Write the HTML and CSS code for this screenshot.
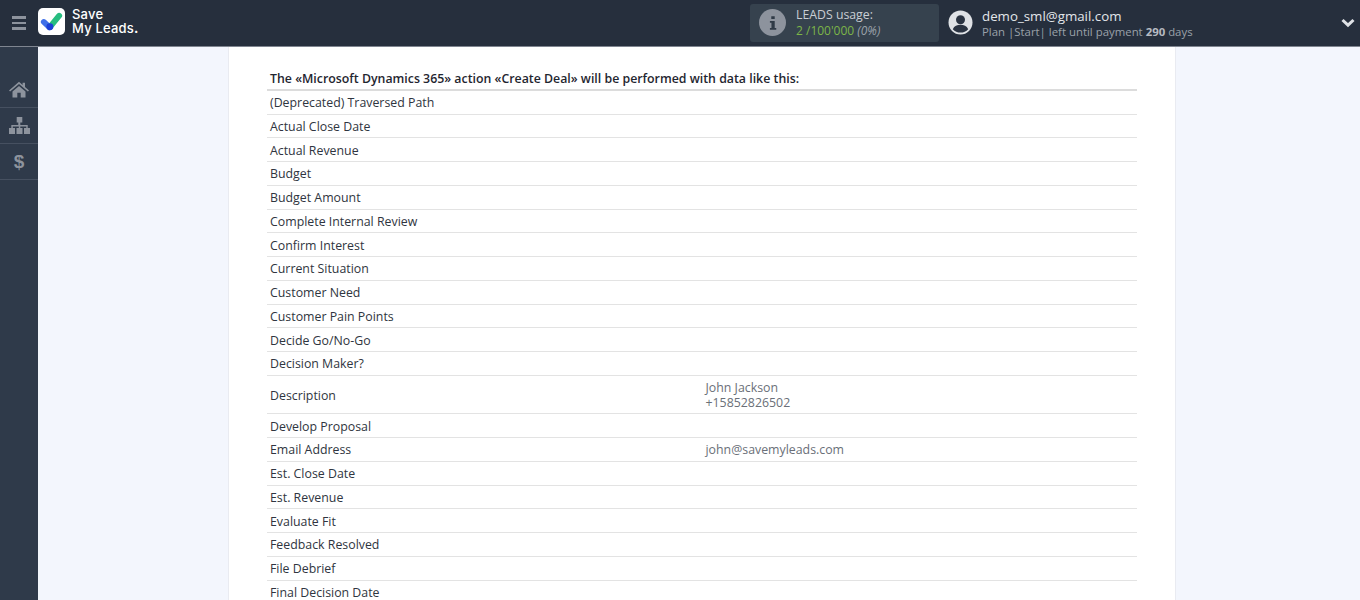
FILE: index.html
```html
<!DOCTYPE html>
<html lang="en">
<head>
<meta charset="utf-8">
<title>Save My Leads</title>
<link rel="stylesheet" href="styles.css">
</head>
<body>
<header class="topbar">
  <button class="burger" aria-label="Menu"><span></span><span></span><span></span></button>
  <div class="logo">
    <div class="logo-mark">
      <svg width="28" height="28" viewBox="0 0 28 28">
        <path d="M6 14.500 L12 20" stroke="#3f6fe8" stroke-width="6" stroke-linecap="round"/>
        <path d="M12.500 19.500 L22 8" stroke="#27bd80" stroke-width="6" stroke-linecap="round"/>
        <circle cx="12.300" cy="19.400" r="3.600" fill="#1c3fd6"/>
      </svg>
    </div>
    <div class="logo-text">Save<br>My Leads<span class="logo-dot">.</span></div>
  </div>
  <div class="usage">
    <div class="info-circle">
      <svg width="12" height="16" viewBox="0 0 14 18"><path fill="#2f3a46" d="M5 1h4v3.400H5zM3.400 6.600H9v8.200h1.800V17H3.400v-2.200h1.800v-6H3.400z"/></svg>
    </div>
    <div class="usage-text">
      <div class="usage-title">LEADS usage:</div>
      <div class="usage-count"><span class="usage-green">2 /100'000</span> <em>(0%)</em></div>
    </div>
  </div>
  <div class="user">
    <svg class="avatar" width="25" height="25" viewBox="0 0 25 25">
      <circle cx="12.500" cy="12.500" r="12" fill="#dfe2e6"/>
      <circle cx="12.500" cy="9.800" r="4.500" fill="#2a3342"/>
      <path fill="#2a3342" d="M4.800 19.200c1.400-3.200 4.400-4.400 7.700-4.400s6.300 1.200 7.700 4.400c-2 2.200-4.700 3.400-7.700 3.400s-5.700-1.200-7.700-3.400z"/>
    </svg>
    <div class="user-text">
      <div class="user-mail">demo_sml@gmail.com</div>
      <div class="user-plan">Plan |Start| left until payment <b>290</b> days</div>
    </div>
  </div>
  <svg class="chevron" width="14" height="10" viewBox="0 0 14 10"><path d="M1.500 2 L7 7.200 L12.500 2" fill="none" stroke="#dfe2e6" stroke-width="3"/></svg>
</header>
<div class="shell">
  <nav class="sidebar">
    <a class="side-item">
      <svg width="20" height="17" viewBox="0 0 20 17"><path fill="#8d939d" d="M10 0.800 L13.600 3.900V1.800h2.400v4.200l4 3.400-1.100 1.200L10 3 1.100 10.600 0 9.400zM3.500 10.500 10 5l6.500 5.500V16.500h-4.800v-4.700H8.300v4.700H3.500z"/></svg>
    </a>
    <a class="side-item">
      <svg width="21" height="17" viewBox="0 0 21 17"><path fill="#8d939d" d="M7.700 0h5.600v5.500h-2v2.500h7.400v3H21v6h-6v-6h2.300V9.400h-6V11h2.200v6H7.500v-6h2.300V9.400h-6V11H6v6H0v-6h2.300V8h7V5.500H7.700z"/></svg>
    </a>
    <a class="side-item">
      <span class="dollar">$</span>
    </a>
  </nav>
  <main class="content">
    <section class="card">
      <h2 class="heading">The «Microsoft Dynamics 365» action «Create Deal» will be performed with data like this:</h2>
      <div class="row"><div>(Deprecated) Traversed Path</div><div class="val"></div></div>
      <div class="row"><div>Actual Close Date</div><div class="val"></div></div>
      <div class="row"><div>Actual Revenue</div><div class="val"></div></div>
      <div class="row"><div>Budget</div><div class="val"></div></div>
      <div class="row"><div>Budget Amount</div><div class="val"></div></div>
      <div class="row"><div>Complete Internal Review</div><div class="val"></div></div>
      <div class="row"><div>Confirm Interest</div><div class="val"></div></div>
      <div class="row"><div>Current Situation</div><div class="val"></div></div>
      <div class="row"><div>Customer Need</div><div class="val"></div></div>
      <div class="row"><div>Customer Pain Points</div><div class="val"></div></div>
      <div class="row"><div>Decide Go/No-Go</div><div class="val"></div></div>
      <div class="row"><div>Decision Maker?</div><div class="val"></div></div>
      <div class="row row-tall"><div>Description</div><div class="val">John Jackson<br>+15852826502</div></div>
      <div class="row"><div>Develop Proposal</div><div class="val"></div></div>
      <div class="row"><div>Email Address</div><div class="val">john@savemyleads.com</div></div>
      <div class="row"><div>Est. Close Date</div><div class="val"></div></div>
      <div class="row"><div>Est. Revenue</div><div class="val"></div></div>
      <div class="row"><div>Evaluate Fit</div><div class="val"></div></div>
      <div class="row"><div>Feedback Resolved</div><div class="val"></div></div>
      <div class="row"><div>File Debrief</div><div class="val"></div></div>
      <div class="row"><div>Final Decision Date</div><div class="val"></div></div>
    </section>
  </main>
</div>
</body>
</html>
```
FILE: styles.css
```css
* { box-sizing: border-box; }
html, body { margin: 0; height: 100%; overflow: hidden; }
body { font-family: "Open Sans", "Liberation Sans", sans-serif; background: #f3f6fd; color: #2a3342; }

.topbar { height: 47px; background: #262f3d; border-bottom: 1px solid #7f8590; display: flex; align-items: center; position: relative; }
.burger { width: 38px; height: 46px; padding: 0 12px; background: none; border: 0; display: flex; flex-direction: column; justify-content: center; gap: 3px; }
.burger span { display: block; height: 2.500px; background: #8d939d; }
.logo { display: flex; align-items: center; width: 712px; margin-top: -3px; }
.logo-mark { width: 27px; height: 27px; background: #fff; border-radius: 5px; overflow: hidden; }
.logo-mark svg { display: block; width: 27px; height: 27px; }
.logo-text { margin-left: 7px; margin-top: -1px; font-family: "Inter", "Liberation Sans", sans-serif; font-weight: 500; font-size: 13px; line-height: 14px; color: #fff; letter-spacing: 0.2px; }
.logo-dot { font-weight: 700; }
.usage { width: 189px; height: 38px; margin-top: -1px; background: #36424e; border-radius: 3px; display: flex; align-items: center; padding-left: 9px; }
.info-circle { width: 27px; height: 27px; border-radius: 50%; background: #8d939d; display: flex; align-items: center; justify-content: center; }
.usage-text { margin-left: 10px; line-height: 15px; color: #c9ced4; margin-top: -1px; }
.usage-title { font-size: 12.300px; }
.usage-count { font-size: 12px; margin-top: 1px; }
.usage-green { color: #7cb548; }
.usage-count em { color: #9aa1a9; }
.user { display: flex; align-items: center; margin-left: 9px; margin-top: -1px; }
.avatar { display: block; }
.user-text { margin-left: 9px; margin-top: 1px; }
.user-mail { font-size: 13.300px; line-height: 16px; color: #e3e6ea; }
.user-plan { font-size: 11.400px; line-height: 15px; color: #9aa1a9; }
.user-plan b { font-weight: 700; color: #b6bbc2; }
.chevron { position: absolute; right: 5px; top: 18px; }

.shell { display: flex; height: 553px; }
.sidebar { width: 38px; flex: none; background: #2f3a4a; padding-top: 25px; }
.side-item { display: flex; align-items: center; justify-content: center; height: 36px; border-bottom: 1px solid #465060; }
.dollar { font-family: "Liberation Sans", sans-serif; font-weight: 700; font-size: 19px; line-height: 20px; color: #8d939d; }

.content { flex: 1; padding-left: 190px; }
.card { width: 948px; height: 700px; background: #fff; border-left: 1px solid #e9ebf1; border-right: 1px solid #e9ebf1; padding: 22px 38px 0 38px; }
.heading { margin: 0; height: 21.750px; padding-left: 3px; font-size: 12.350px; font-weight: 600; line-height: 20px; color: #1f2630; border-bottom: 2px solid #dcdcdc; }
.row { display: grid; grid-template-columns: 435.500px 1fr; align-items: center; min-height: 23.750px; padding-top: 1px; padding-left: 3px; border-bottom: 1px solid #e3e3e3; font-size: 12.350px; line-height: 15px; color: #2f3540; }
.row-tall { min-height: 38.500px; padding-top: 4.500px; padding-bottom: 3px; }
.val { color: #6a6f78; }
```
